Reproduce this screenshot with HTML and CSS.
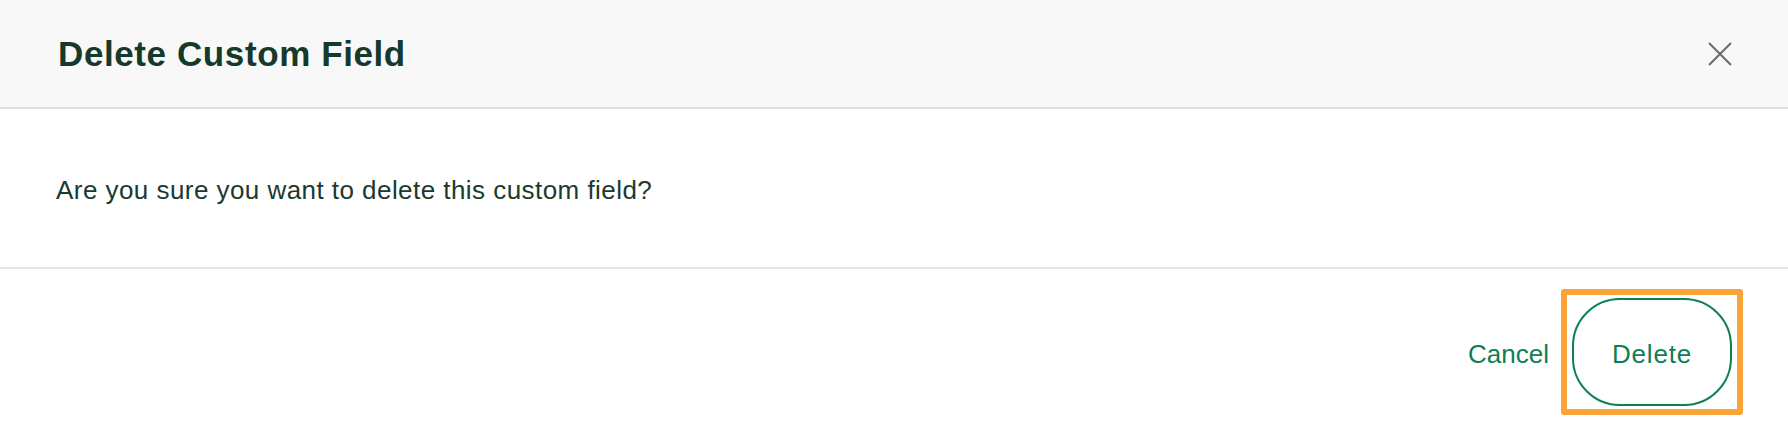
FILE: index.html
```html
<!DOCTYPE html>
<html>
    <head>
        <meta charset="utf-8">
        <title>Delete Custom Field</title>
        <link rel="stylesheet" href="styles.css">
    </head>
    <body>
        <div class="modal">
            <div class="modal_header">
                <h2 class="modal_title">Delete Custom Field</h2>
                <button class="modal_close" aria-label="Close">
                    <svg width="24" height="24" viewBox="0 0 24 24">
                        <path d="M1 1 L23 23 M23 1 L1 23" stroke="#6b6b6b" stroke-width="2" fill="none"/>
                    </svg>
                </button>
            </div>
            <div class="modal_body">
                <p>Are you sure you want to delete this custom field?</p>
            </div>
            <div class="modal_footer">
                <button class="btn_cancel">Cancel</button>
                <span class="highlight">
                    <button class="btn_delete">Delete</button>
                </span>
            </div>
        </div>
    </body>
</html>
```

FILE: styles.css
```css
* {
    box-sizing: border-box;
}

body {
    margin: 0;
    font-family: "Liberation Sans", Arial, sans-serif;
    background-color: #ffffff;
}

.modal {
    width: 1788px;
    height: 434px;
    display: flex;
    flex-direction: column;
}

.modal_header {
    height: 109px;
    background-color: #f8f8f8;
    border-bottom: 2px solid #dedede;
    display: flex;
    flex-direction: row;
    justify-content: space-between;
    align-items: center;
    padding: 0 56px 0 58px;
}

.modal_title {
    margin: 0;
    font-size: 35px;
    font-weight: bold;
    letter-spacing: 0.6px;
    color: #15392a;
}

.modal_close {
    border: none;
    background: none;
    padding: 0;
    width: 24px;
    height: 24px;
    cursor: pointer;
}

.modal_close svg {
    display: block;
}

.modal_body {
    height: 160px;
    border-bottom: 2px solid #e4e4e4;
    display: flex;
    align-items: center;
    padding: 5px 56px 0 56px;
}

.modal_body p {
    margin: 0;
    font-size: 26px;
    letter-spacing: 0.45px;
    color: #1b3a2f;
}

.modal_footer {
    flex: 1;
    display: flex;
    flex-direction: row;
    justify-content: flex-end;
    align-items: center;
    padding: 0 45px 0 0;
    gap: 12px;
}

.btn_cancel {
    border: none;
    background: none;
    padding: 6px 0 0 0;
    font-family: inherit;
    font-size: 26px;
    color: #0d7f55;
    cursor: pointer;
}

.highlight {
    display: inline-flex;
    border: 6px solid #f9a33a;
    border-radius: 3px;
    padding: 3px 5px 3px 5px;
}

.btn_delete {
    width: 160px;
    height: 108px;
    border: 2px solid #0d7f55;
    border-radius: 48px;
    background-color: #ffffff;
    padding-top: 6px;
    font-family: inherit;
    font-size: 26px;
    letter-spacing: 0.8px;
    color: #0d7f55;
    cursor: pointer;
}
```
